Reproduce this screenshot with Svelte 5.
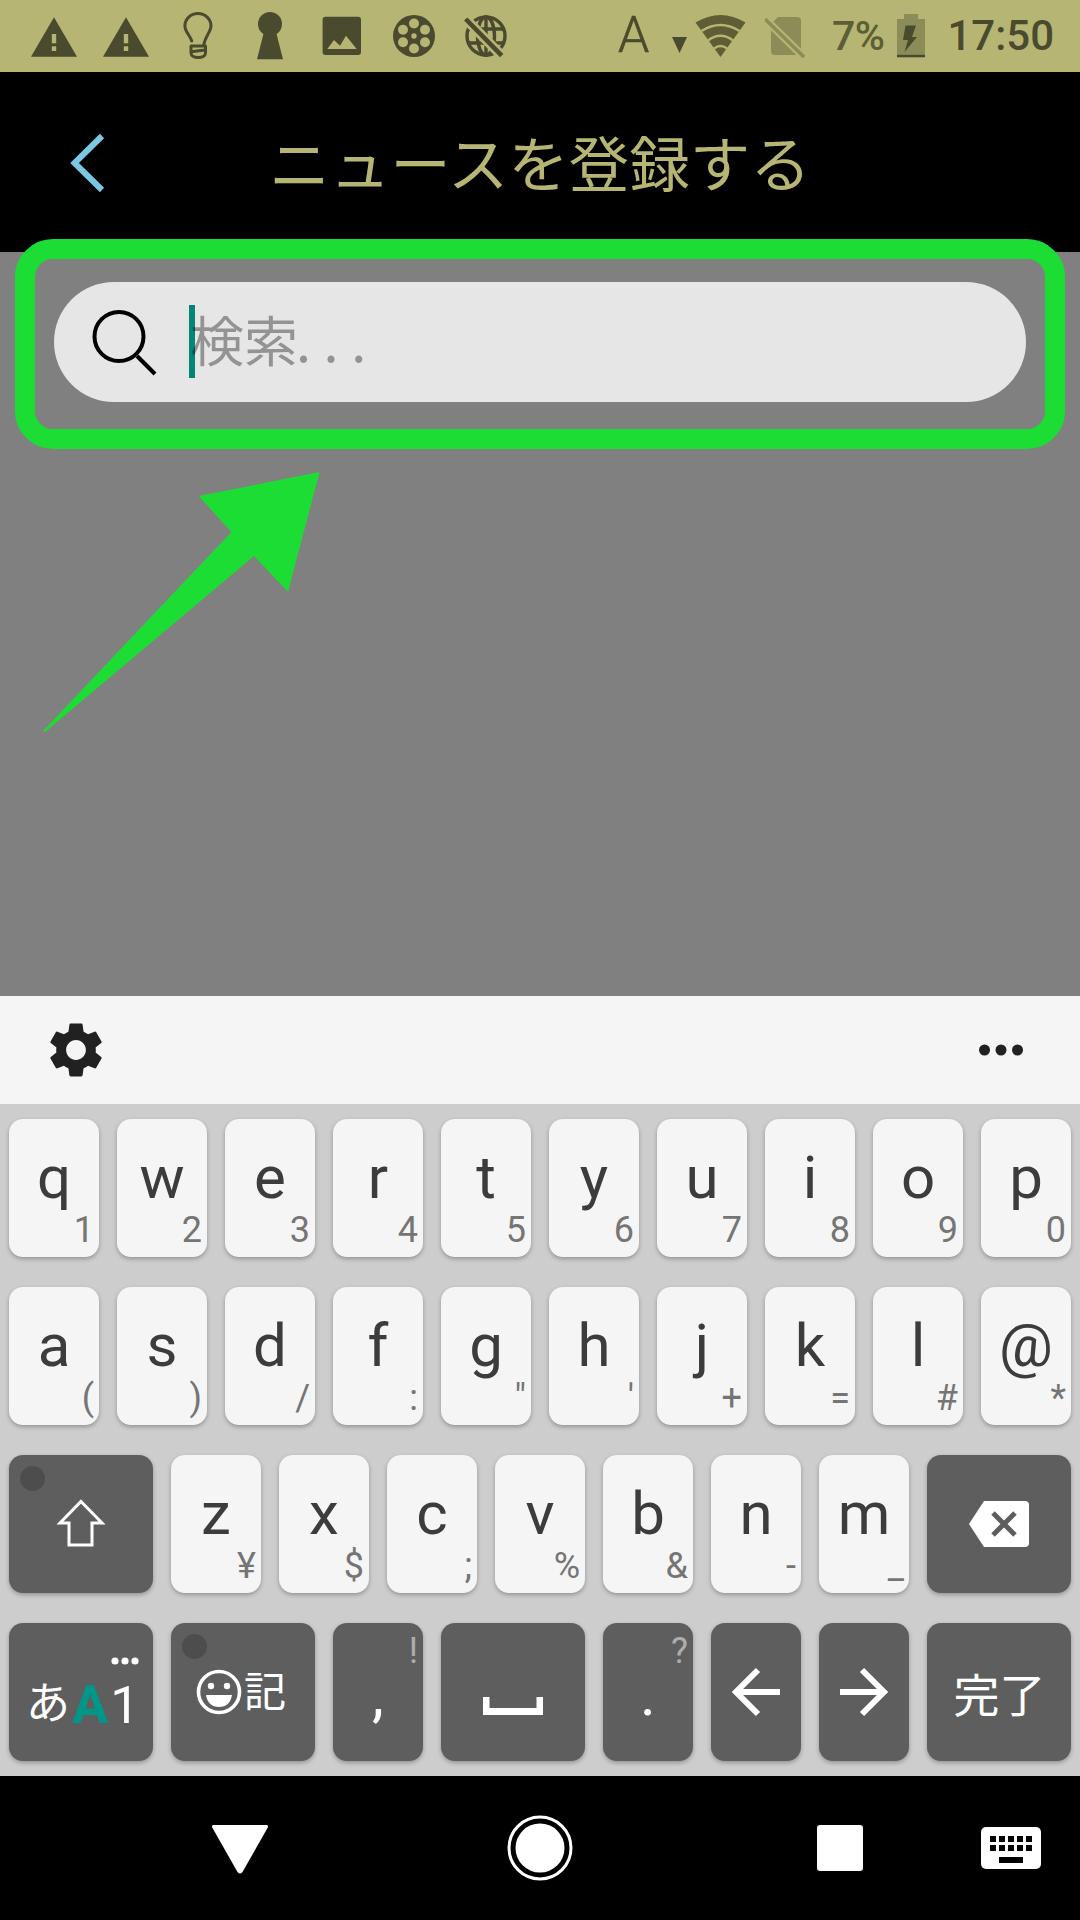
<script>
  const row1 = [['q','1'],['w','2'],['e','3'],['r','4'],['t','5'],['y','6'],['u','7'],['i','8'],['o','9'],['p','0']];
  const row2 = [['a','('],['s',')'],['d','/'],['f',':'],['g','"'],['h',"'"],['j','+'],['k','='],['l','#'],['@','*']];
  const row3 = [['z','¥'],['x','$'],['c',';'],['v','%'],['b','&'],['n','-'],['m','_']];
  const reelHoles = [[36,23.5],[47,29.8],[47,42.2],[36,48.5],[25,42.2],[25,29.8]];
  const kbKeys = [0,1,2,3,4];
</script>

{#snippet letterKey(k)}
  <div class="key light"><span class="main">{k[0]}</span><span class="sub">{k[1]}</span></div>
{/snippet}

<div class="screen">
  <div class="status">
    <div class="cells">
      <svg class="cell" viewBox="0 0 72 72"><polygon class="ink" points="36,17.3 59,56.7 13,56.7"/><rect class="bg" x="33.8" y="34" width="4.4" height="9.3"/><rect class="bg" x="33.8" y="46.3" width="4.4" height="4.7"/></svg>
      <svg class="cell" viewBox="0 0 72 72"><polygon class="ink" points="36,17.3 59,56.7 13,56.7"/><rect class="bg" x="33.8" y="34" width="4.4" height="9.3"/><rect class="bg" x="33.8" y="46.3" width="4.4" height="4.7"/></svg>
      <svg class="cell" viewBox="0 0 72 72"><path class="line" d="M29.7 41 C28 35 22.9 32 22.9 25.7 A13 12.2 0 0 1 49 25.7 C49 32 43 36 41.5 46 L29 46 L29 53 C29 59 43.5 59 43.5 53 L43.5 46 M29 51.8 L43 50"/></svg>
      <svg class="cell" viewBox="0 0 72 72"><circle class="ink" cx="36" cy="24" r="12"/><polygon class="ink" points="30.5,30 41.5,30 49,59.3 23,59.3"/></svg>
      <svg class="cell" viewBox="0 0 72 72"><rect class="ink" x="16.6" y="16.7" width="38.4" height="38.3" rx="3"/><polygon class="bg" points="21.3,49 28,40 34,45.7 40,35.7 50.7,49"/></svg>
      <svg class="cell" viewBox="0 0 72 72"><circle class="ink" cx="36" cy="36" r="21"/>{#each reelHoles as h}<circle class="bg" cx={h[0]} cy={h[1]} r="5"/>{/each}<circle class="bg" cx="36" cy="36" r="2.7"/></svg>
      <svg class="cell" viewBox="0 0 72 72">
        <circle class="line thick" cx="36" cy="36" r="19"/>
        <ellipse class="line thick" cx="36" cy="36" rx="8.5" ry="19"/>
        <path class="line thick" d="M36 17 V55 M19 29 H53 M19 43 H53"/>
        <path class="halo" d="M15.7 19 L51.7 55.7"/>
        <path class="slash" d="M15.7 19 L51.7 55.7"/>
      </svg>
    </div>
    <div class="status-right">
      <span class="net">A</span>
      <svg class="tri" viewBox="0 0 15 16"><polygon class="ink" points="0,0 15,0 7.5,16"/></svg>
      <svg class="wifi" viewBox="0 0 51 42">
        <path class="wave" d="M25.5 42 L0.5 7.5 Q25.5 -7.5 50.5 7.5 Z"/>
        <path class="gap" d="M6.5 16 Q25.5 4 44.5 16 M13 25.5 Q25.5 16 38 25.5 M19 33.5 Q25.5 28.5 32 33.5"/>
      </svg>
      <svg class="sim" viewBox="0 0 40 42">
        <path class="fade" d="M13 1 H32 Q36 1 36 5 V35 Q36 39 32 39 H10 Q6 39 6 35 V8 Z"/>
        <path class="simhalo" d="M0 3 L39 41"/>
        <path class="simslash" d="M0 3 L39 41"/>
      </svg>
      <span class="pct">7%</span>
      <svg class="batt" viewBox="0 0 28 44">
        <path class="fade" d="M7 0 H21 V5 H28 V40 H0 V5 H7 Z"/>
        <rect class="ink" x="0" y="40.5" width="28" height="2.8"/>
        <polygon class="ink" points="8.5,11.5 19,11.5 15,23 20,23 7.5,38 11,26 6,26"/>
      </svg>
      <span class="time">17:50</span>
    </div>
  </div>

  <header class="bar">
    <svg class="back" viewBox="0 0 44 66"><path d="M35 4 L7.5 31 L35 58"/></svg>
    <h1>ニュースを登録する</h1>
  </header>

  <main class="content">
    <div class="pill">
      <span class="cursor"></span>
      <svg class="mag" viewBox="0 0 66 66"><circle cx="27" cy="26.5" r="24.5"/><path d="M45 46 L63 64"/></svg>
      <span class="ph">検索<span class="dots">...</span></span>
    </div>
    <div class="frame"></div>
    <svg class="arrow" viewBox="0 0 1080 1920"><polygon points="319.6,472 198.7,496 231.4,532 43,731 45,732 254,556 288,591.7"/></svg>
  </main>

  <section class="kb">
    <div class="tools">
      <svg class="gear" viewBox="0 0 24 24"><path d="M19.14,12.94c0.04-0.3,0.06-0.61,0.06-0.94c0-0.32-0.02-0.64-0.07-0.94l2.03-1.58c0.18-0.14,0.23-0.41,0.12-0.61 l-1.92-3.32c-0.12-0.22-0.37-0.29-0.59-0.22l-2.39,0.96c-0.5-0.38-1.03-0.7-1.62-0.94L14.4,2.81c-0.04-0.24-0.24-0.41-0.48-0.41 h-3.84c-0.24,0-0.43,0.17-0.47,0.41L9.25,5.35C8.66,5.59,8.12,5.92,7.63,6.29L5.24,5.33c-0.22-0.08-0.47,0-0.59,0.22L2.74,8.87 C2.62,9.08,2.66,9.34,2.86,9.48l2.03,1.58C4.84,11.36,4.8,11.69,4.8,12s0.02,0.64,0.07,0.94l-2.03,1.58 c-0.18,0.14-0.23,0.41-0.12,0.61l1.92,3.32c0.12,0.22,0.37,0.29,0.59,0.22l2.39-0.96c0.5,0.38,1.03,0.7,1.62,0.94l0.36,2.54 c0.05,0.24,0.24,0.41,0.48,0.41h3.84c0.24,0,0.44-0.17,0.47-0.41l0.36-2.54c0.59-0.24,1.13-0.56,1.62-0.94l2.39,0.96 c0.22,0.08,0.47,0,0.59-0.22l1.92-3.32c0.12-0.22,0.07-0.47-0.12-0.61L19.14,12.94z M12,15.6c-1.98,0-3.6-1.62-3.6-3.6 s1.62-3.6,3.6-3.6s3.6,1.62,3.6,3.6S13.98,15.6,12,15.6z"/></svg>
      <svg class="more" viewBox="0 0 44 12"><circle cx="5.5" cy="6" r="5.5"/><circle cx="22" cy="6" r="5.5"/><circle cx="38.5" cy="6" r="5.5"/></svg>
    </div>
    <div class="keys">
      <div class="row">{#each row1 as k}{@render letterKey(k)}{/each}</div>
      <div class="row">{#each row2 as k}{@render letterKey(k)}{/each}</div>
      <div class="row">
        <div class="key dark wide center">
          <span class="spot"></span>
          <svg class="ic shift" width="50" height="52" viewBox="0 0 50 52"><polygon class="outline" points="25,2.5 46,24 36,24 36,46 13,46 13,24 4,24"/></svg>
        </div>
        {#each row3 as k}{@render letterKey(k)}{/each}
        <div class="key dark wide center">
          <svg class="ic" width="60" height="46" viewBox="0 0 60 46"><path fill="#fff" d="M15 0 H56 Q60 0 60 4 V42 Q60 46 56 46 H15 L0 23 Z"/><path class="xmark" d="M24 12 L46 34 M46 12 L24 34"/></svg>
        </div>
      </div>
      <div class="row">
        <div class="key dark wide mode">
          <svg class="modedots" viewBox="0 0 28 8"><circle cx="4" cy="4" r="3.6"/><circle cx="14" cy="4" r="3.6"/><circle cx="24" cy="4" r="3.6"/></svg>
          <span class="m-kana">あ</span><span class="m-a">A</span><span class="m-1">1</span>
        </div>
        <div class="key dark wide center emoji">
          <span class="spot"></span>
          <svg class="ic" width="46" height="46" viewBox="0 0 46 46"><circle class="face" cx="23" cy="23" r="20.5"/><circle class="w" cx="15" cy="17" r="3.2"/><circle class="w" cx="31" cy="17" r="3.2"/><path class="w" d="M10 26 H36 Q34 38 23 38 Q12 38 10 26 Z"/></svg>
          <span class="ki">記</span>
        </div>
        <div class="key dark"><span class="main white">,</span><span class="sup">!</span></div>
        <div class="key dark wide center">
          <svg class="ic space" width="60" height="18" viewBox="0 0 60 18"><path fill="#fff" d="M0 0 H6.5 V11 H53.5 V0 H60 V18 H0 Z"/></svg>
        </div>
        <div class="key dark"><span class="main white">.</span><span class="sup">?</span></div>
        <div class="key dark center">
          <svg class="ic arrowic" width="50" height="50" viewBox="0 0 50 50"><path d="M49 25 H4 M27 3 L5 25 L27 47"/></svg>
        </div>
        <div class="key dark center">
          <svg class="ic arrowic" width="50" height="50" viewBox="0 0 50 50"><path d="M1 25 H46 M23 3 L45 25 L23 47"/></svg>
        </div>
        <div class="key dark wide center done">完了</div>
      </div>
    </div>
  </section>

  <nav class="nav">
    <svg class="nv n1" viewBox="0 0 72 72"><path d="M10 13 H62 Q65 13 63.5 16 L38.5 60 Q36 63 33.5 60 L8.5 16 Q7 13 10 13 Z"/></svg>
    <svg class="nv n2" viewBox="0 0 72 72"><circle class="ring" cx="36" cy="36" r="31"/><circle cx="36" cy="36" r="24.5"/></svg>
    <svg class="nv n3" viewBox="0 0 72 72"><rect x="13" y="13" width="46" height="46" rx="3"/></svg>
    <svg class="nv n4" viewBox="0 0 72 72">
      <rect x="6" y="15" width="60" height="42" rx="5"/>
      {#each kbKeys as i}<rect class="kk" x={15 + i * 9} y="24" width="6" height="6"/><rect class="kk" x={15 + i * 9} y="33" width="6" height="6"/>{/each}
      <rect class="kk" x="24" y="45" width="24" height="6"/>
    </svg>
  </nav>
</div>

<style>
  :global(body) { margin: 0; background: #000; }
  .screen { width: 1080px; height: 1920px; display: flex; flex-direction: column; overflow: hidden; font-family: Roboto, "Noto Sans CJK JP", sans-serif; background: #000; position: relative; }

  .status { height: 72px; background: #b6b573; display: flex; align-items: center; justify-content: space-between; padding-left: 18px; flex: none; }
  .cells { display: flex; }
  .cell { width: 72px; height: 72px; display: block; }
  .ink { fill: #4a4a2e; }
  .bg { fill: #b6b573; }
  .line { fill: none; stroke: #4a4a2e; stroke-width: 3; stroke-linejoin: round; stroke-linecap: round; }
  .thick { stroke-width: 3.4; }
  .halo { stroke: #b6b573; stroke-width: 10; fill: none; }
  .slash { stroke: #4a4a2e; stroke-width: 4.6; fill: none; }
  .status-right { display: flex; align-items: center; height: 72px; width: 462px; position: relative; }
  .net { font-weight: 300; font-size: 50px; line-height: 72px; color: #4a4a2e; width: 54px; position: relative; top: -1px; -webkit-text-stroke: 0.6px #4a4a2e; }
  .tri { width: 15px; height: 16px; position: relative; top: 9px; }
  .wifi { width: 51px; height: 42px; margin-left: 8px; }
  .wave { fill: #5e5e36; }
  .gap { fill: none; stroke: #b6b573; stroke-width: 2.4; }
  .sim { width: 40px; height: 42px; margin-left: 19px; position: relative; top: 1px; }
  .fade { fill: #8c8c59; }
  .simhalo { stroke: #b6b573; stroke-width: 8; fill: none; }
  .simslash { stroke: #8c8c59; stroke-width: 3.6; fill: none; }
  .pct { font-size: 41px; font-weight: 500; color: #5e5e36; margin-left: 27px; line-height: 72px; letter-spacing: -0.5px; }
  .batt { width: 28px; height: 44px; margin-left: 12px; }
  .time { font-size: 42px; font-weight: 500; color: #4a4a2e; margin-left: 23px; line-height: 72px; }

  .bar { height: 180px; flex: none; background: #000; display: flex; align-items: center; justify-content: center; position: relative; }
  .back { position: absolute; left: 67px; top: 60px; width: 44px; height: 66px; }
  .back path { fill: none; stroke: #7cc8e4; stroke-width: 6; }
  h1 { margin: 0; font: 400 60.5px/1 "Noto Sans CJK JP", sans-serif; color: #b6b573; position: relative; top: -1px; }

  .content { height: 744px; flex: none; background: #808080; padding: 30px 54px 0; box-sizing: border-box; position: relative; }
  .pill { height: 120px; border-radius: 60px; background: #e6e6e6; display: flex; align-items: center; position: relative; }
  .cursor { position: absolute; left: 135px; top: 23px; width: 6px; height: 73px; background: #008577; }
  .mag { width: 66px; height: 66px; margin-left: 38px; position: relative; top: 1px; flex: none; }
  .mag circle, .mag path { fill: none; stroke: #000; stroke-width: 4; }
  .ph { margin-left: 32px; font: 400 54px/1 "Noto Sans CJK JP", sans-serif; color: rgba(0,0,0,0.36); position: relative; top: -3px; }
  .dots { letter-spacing: 12.6px; margin-left: -2px; }
  .frame { position: absolute; left: 15px; top: -13px; width: 1050px; height: 210px; box-sizing: border-box; border: 20px solid #1bdd34; border-radius: 38px; }
  .arrow { position: absolute; left: 0; top: -252px; width: 1080px; height: 1920px; pointer-events: none; }
  .arrow polygon { fill: #1bdd34; }

  .kb { flex: none; height: 780px; display: flex; flex-direction: column; }
  .tools { height: 108px; background: #f5f5f5; display: flex; align-items: center; justify-content: space-between; padding: 0 42px 0 43px; flex: none; }
  .gear { width: 66px; height: 66px; fill: #212121; }
  .more { width: 44px; height: 12px; fill: #212121; margin-right: 15px; }
  .keys { height: 672px; background: #cdcdcd; padding: 15px 9px; box-sizing: border-box; display: flex; flex-direction: column; gap: 30px; }
  .row { display: flex; gap: 18px; height: 138px; }
  .key { width: 90px; height: 138px; flex: none; border-radius: 14px; position: relative; box-shadow: 0 2px 4px rgba(0,0,0,0.28); text-align: center; box-sizing: border-box; }
  .wide { width: 144px; }
  .light { background: #f5f5f5; color: #3c3c3c; }
  .dark { background: #5e5e5e; color: #fff; }
  .center { display: flex; align-items: center; justify-content: center; }
  .main { display: block; font-size: 60px; line-height: 60px; padding-top: 29px; }
  .white { color: #fff; padding-top: 42px; }
  .sub { position: absolute; right: 5px; bottom: 9px; font-size: 36px; line-height: 36px; color: #757575; }
  .sup { position: absolute; right: 5px; top: 10px; font-size: 36px; line-height: 36px; color: #adadad; }
  .spot { position: absolute; left: 11px; top: 11px; width: 25px; height: 25px; border-radius: 50%; background: #4d4d4d; }
  .ic { display: block; }
  .shift { margin-top: 2px; }
  .space { margin-top: 28px; }
  .outline { fill: none; stroke: #fff; stroke-width: 3; stroke-linejoin: miter; }
  .xmark { stroke: #5e5e5e; stroke-width: 5; fill: none; }
  .arrowic path { fill: none; stroke: #fff; stroke-width: 6; }
  .face { fill: none; stroke: #fff; stroke-width: 3.6; }
  .w { fill: #fff; }
  .emoji { gap: 2px; justify-content: flex-start; padding-left: 25px; }
  .ki { font: 400 42px/1 "Noto Sans CJK JP", sans-serif; position: relative; top: -3px; }
  .done { font: 400 46px/1 "Noto Sans CJK JP", sans-serif; padding-left: 1px; }
  .mode { display: flex; align-items: baseline; padding: 55px 0 0 17px; }
  .modedots { position: absolute; left: 102px; top: 34px; width: 28px; height: 8px; fill: #fff; }
  .m-kana { font: 400 44px/1 "Noto Sans CJK JP", sans-serif; transform: translateY(-4px); }
  .m-a { font-size: 54px; line-height: 54px; font-weight: 700; color: #009688; margin-left: 2px; }
  .m-1 { font-size: 52px; line-height: 54px; margin-left: 2px; }

  .nav { height: 144px; flex: none; background: #000; display: flex; align-items: center; }
  .nv { width: 72px; height: 72px; fill: #fff; }
  .n1 { margin-left: 204px; }
  .n2 { margin-left: 228px; }
  .n3 { margin-left: 228px; }
  .n4 { margin-left: 99px; }
  .ring { fill: none; stroke: #fff; stroke-width: 3; }
  .kk { fill: #000; }
</style>
